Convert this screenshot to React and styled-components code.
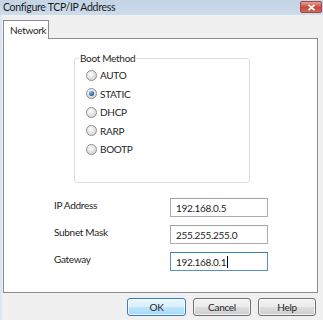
import React, { useState } from 'react';
import styled, { createGlobalStyle } from 'styled-components';

const GlobalStyle = createGlobalStyle`
    html, body {
        margin: 0;
        padding: 0;
        background: #f0f0f0;
    }
    * {
        box-sizing: border-box;
    }
`;

const methods = ['AUTO', 'STATIC', 'DHCP', 'RARP', 'BOOTP'];

const fields = [
    { label: 'IP Address', value: '192.168.0.5' },
    { label: 'Subnet Mask', value: '255.255.255.0' },
    { label: 'Gateway', value: '192.168.0.1', focused: true },
];

function App() {
    const [method, setMethod] = useState('STATIC');

    return (
        <Window>
            <GlobalStyle />
            <TitleBar>
                <Title>Configure TCP/IP Address</Title>
                <CloseButton aria-label="Close">
                    <svg width="9" height="7" viewBox="0 0 9 7">
                        <path d="M1.5 0.8 L7.5 6.2 M7.5 0.8 L1.5 6.2" stroke="#fff" strokeWidth="1.8" />
                    </svg>
                </CloseButton>
            </TitleBar>

            <Body>
                <TabStrip>
                    <Tab>Network</Tab>
                </TabStrip>
                <Panel>
                    <GroupBox>
                        <Legend>Boot Method</Legend>
                        {methods.map(m => (
                            <RadioRow key={m} onClick={() => setMethod(m)}>
                                <Radio checked={method === m} />
                                <span>{m}</span>
                            </RadioRow>
                        ))}
                    </GroupBox>

                    <Form>
                        {fields.map(f => (
                            <React.Fragment key={f.label}>
                                <FieldLabel>{f.label}</FieldLabel>
                                <Input focused={f.focused}>
                                    {f.value}
                                    {f.focused && <Caret />}
                                </Input>
                            </React.Fragment>
                        ))}
                    </Form>
                </Panel>

                <Footer>
                    <Button primary>OK</Button>
                    <Button>Cancel</Button>
                    <Button>Help</Button>
                </Footer>
            </Body>
        </Window>
    );
}

const Window = styled.div`
    width: 323px;
    height: 320px;
    display: flex;
    flex-direction: column;
    background: #f0f0f0;
    font-family: Lato, "Liberation Sans", sans-serif;
    font-size: 10px;
    letter-spacing: -0.3px;
    color: #1e1e1e;
    overflow: hidden;
`;

const TitleBar = styled.div`
    height: 15px;
    display: flex;
    align-items: center;
    justify-content: space-between;
    padding: 0 1px 0 3px;
    background: linear-gradient(#c3d4e6, #cddbea);
`;

const Title = styled.div`
    font-size: 10.5px;
    color: #1a1a1a;
    margin-top: -2px;
`;

const CloseButton = styled.div`
    width: 22px;
    height: 12px;
    margin-top: -1px;
    border: 1px solid #9b4a4a;
    border-radius: 2px;
    background: linear-gradient(#e9a197, #c8483a 55%, #d36a5a);
    display: flex;
    align-items: center;
    justify-content: center;
`;

const Body = styled.div`
    flex: 1;
    display: flex;
    flex-direction: column;
    padding: 5px 5px 0 3px;
    background: linear-gradient(90deg, #dce6f0 0, #dce6f0 2px, #f0f0f0 2px);
`;

const TabStrip = styled.div`
    display: flex;
    height: 18px;
`;

const Tab = styled.div`
    width: 46px;
    height: 19px;
    padding: 3px 0 0 6px;
    border: 1px solid #898c95;
    border-bottom: none;
    background: #fff;
    position: relative;
    z-index: 1;
`;

const Panel = styled.div`
    height: 255px;
    border: 1px solid #898c95;
    background: #fff;
    display: flex;
    flex-direction: column;
`;

const GroupBox = styled.fieldset`
    margin: 13px 0 0 70px;
    width: 176px;
    height: 131px;
    padding: 1px 0 0 11px;
    border: 1px solid #d5dfe5;
    border-radius: 3px;
    display: flex;
    flex-direction: column;
`;

const Legend = styled.legend`
    padding: 0 1px;
    margin-left: -7px;
    line-height: 13px;
`;

const RadioRow = styled.label`
    height: 18.5px;
    display: flex;
    align-items: center;
    gap: 3px;
    cursor: default;
`;

const Radio = styled.span`
    width: 11px;
    height: 11px;
    border-radius: 50%;
    border: 1px solid #8f8f8f;
    background: radial-gradient(circle at 40% 35%, #ffffff 0, #e6e6e6 45%, #c9c9c9 100%);
    position: relative;
    &::after {
        content: '';
        display: ${p => (p.checked ? 'block' : 'none')};
        position: absolute;
        left: 2px;
        top: 2px;
        width: 5px;
        height: 5px;
        border-radius: 50%;
        background: radial-gradient(circle at 40% 35%, #7fc0ee, #1c5a9a 70%);
    }
`;

const Form = styled.div`
    display: grid;
    grid-template-columns: 116px 98px;
    grid-auto-rows: 19px;
    row-gap: 8px;
    align-items: center;
    margin: 15px 0 0 50px;
`;

const FieldLabel = styled.div`
    margin-top: -6px;
`;

const Input = styled.div`
    height: 19px;
    border: 1px solid ${p => (p.focused ? '#5a8fc4' : '#abadb3')};
    border-top-color: ${p => (p.focused ? '#3d7bad' : '#a0a3a9')};
    background: #fff;
    padding: 1px 0 0 5px;
    display: flex;
    align-items: center;
`;

const Caret = styled.span`
    width: 1px;
    height: 12px;
    background: #000;
    margin-left: 1px;
`;

const Footer = styled.div`
    display: flex;
    justify-content: flex-end;
    gap: 7px;
    padding-top: 5px;
    padding-right: 2px;
`;

const Button = styled.div`
    width: ${p => (p.primary ? '59px' : '58px')};
    height: 18px;
    border: 1px solid ${p => (p.primary ? '#3c7fb1' : '#707070')};
    border-radius: 3px;
    background: ${p => (p.primary
        ? 'linear-gradient(#eaf6fd 0, #d9f0fc 50%, #bee6fd 50%, #a7d9f5 100%)'
        : 'linear-gradient(#f2f2f2 0, #ebebeb 50%, #dddddd 50%, #cfcfcf 100%)')};
    box-shadow: inset 0 0 0 1px rgba(255, 255, 255, 0.7);
    display: flex;
    align-items: center;
    justify-content: center;
`;

export default App;
